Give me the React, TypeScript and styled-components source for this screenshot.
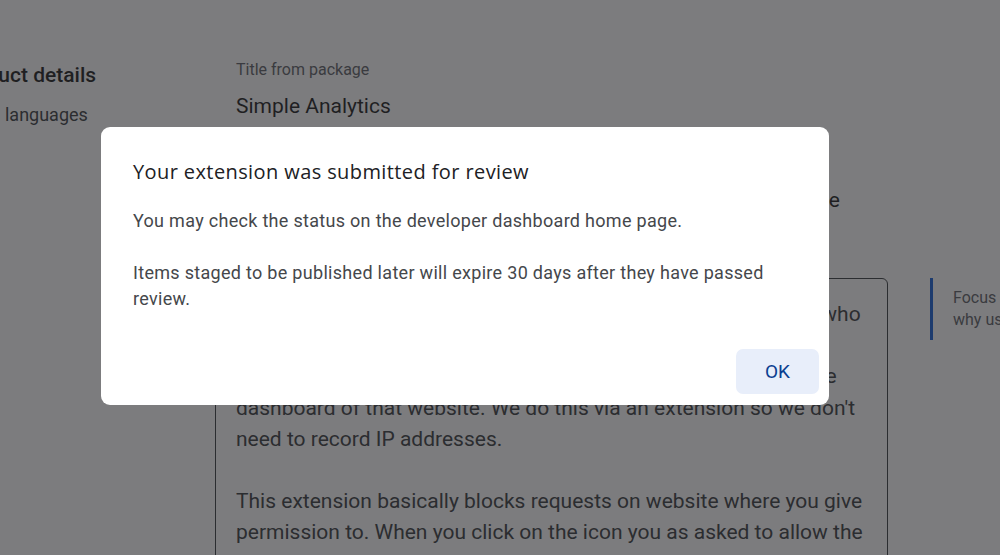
import styled, { createGlobalStyle } from 'styled-components'

const GlobalStyle = createGlobalStyle`
  html, body {
    margin: 0;
    padding: 0;
    background: #ffffff;
    overflow: hidden;
  }
  body {
    font-family: Roboto, "Liberation Sans", sans-serif;
  }
`

const Page = styled.div`
  width: 1000px;
  height: 555px;
  display: flex;
  align-items: flex-start;
  overflow: hidden;
  position: relative;
`

/* left nav, scrolled partly out of view on the left */
const SideNav = styled.nav`
  flex: 0 0 140px;
  width: 140px;
  min-width: 0;
  padding-top: 63px;
  display: flex;
  flex-direction: column;
  gap: 17px;
`

const NavTitle = styled.div`
  font-size: 21px;
  font-weight: 500;
  color: #1f1f1f;
  white-space: nowrap;
  margin-left: -46px;
`

const NavItem = styled.div`
  font-size: 18px;
  color: #3c4043;
  white-space: nowrap;
  margin-left: -20px;
`

const Main = styled.main`
  flex: 0 0 673px;
  width: 673px;
  min-width: 0;
  margin-left: 75px;
  padding-top: 60px;
  display: flex;
  flex-direction: column;
`

const FieldLabel = styled.div`
  font-size: 16px;
  color: #5f6368;
  margin-left: 21px;
`

const FieldValue = styled.div`
  font-size: 21px;
  color: #1f1f1f;
  margin: 15px 0 0 21px;
`

/* right-aligned so its last letter ends just past the dialog edge */
const Heading = styled.div`
  width: 604px;
  font-size: 21px;
  color: #1f1f1f;
  margin: 70px 0 0 21px;
  white-space: nowrap;
  text-align: right;
`

const TextArea = styled.div`
  margin-top: 66px;
  width: 673px;
  border: 1px solid #3c4043;
  border-radius: 6px;
  padding: 20px 20px 0 20px;
  box-sizing: border-box;
  font-size: 21px;
  line-height: 31.2px;
  color: #3c4043;
  height: 340px;
  white-space: nowrap;
`

const Para = styled.p`
  margin: 0 0 31.2px 0;
`

const Aside = styled.aside`
  flex: 0 0 auto;
  box-sizing: border-box;
  margin: 278px 0 0 42px;
  border-left: 3px solid #1a62d8;
  height: 62px;
  padding: 9px 0 0 20px;
  font-size: 16px;
  line-height: 22px;
  color: #5f6368;
  white-space: nowrap;
`

const Scrim = styled.div`
  position: absolute;
  inset: 0;
  background: rgba(32, 33, 36, 0.59);
`

const Dialog = styled.div`
  position: absolute;
  left: 101px;
  top: 127px;
  width: 728px;
  height: 278px;
  box-sizing: border-box;
  background: #ffffff;
  border-radius: 9px;
  padding: 31px 10px 11px 32px;
  display: flex;
  flex-direction: column;
`

const DialogTitle = styled.h2`
  margin: 0;
  font-family: "Open Sans", "Noto Sans", sans-serif;
  font-size: 20px;
  font-weight: 500;
  letter-spacing: 0.4px;
  line-height: 28px;
  color: #202124;
`

const DialogBody = styled.div`
  margin-top: 22px;
  font-size: 18px;
  letter-spacing: 0.3px;
  line-height: 26px;
  color: #45474b;
  padding-right: 40px;
`

const BodyText = styled.p`
  margin: 0 0 26px 0;
`

const Actions = styled.div`
  margin-top: auto;
  display: flex;
  justify-content: flex-end;
`

const OkButton = styled.button`
  width: 83px;
  height: 45px;
  border: none;
  border-radius: 7px;
  background: #e8eefa;
  color: #0b3f91;
  font-family: Roboto, sans-serif;
  font-size: 19px;
  cursor: pointer;
`

export default function App() {
  return (
    <>
      <GlobalStyle />
      <Page>
        <SideNav>
          <NavTitle>Product details</NavTitle>
          <NavItem>All languages</NavItem>
        </SideNav>
        <Main>
          <FieldLabel>Title from package</FieldLabel>
          <FieldValue>Simple Analytics</FieldValue>
          <Heading>Ignore your own visits in Simple Analytics for a site you manage</Heading>
          <TextArea>
            <Para>
              Simple Analytics is a privacy-first analytics tool. It is for people who
              <br />
              have a website with Simple Analytics and want to ignore
              <br />
              their own visits so that all their own page views don't show in the
              <br />
              dashboard of that website. We do this via an extension so we don't
              <br />
              need to record IP addresses.
            </Para>
            <Para>
              This extension basically blocks requests on website where you give
              <br />
              permission to. When you click on the icon you as asked to allow the
            </Para>
          </TextArea>
        </Main>
        <Aside>
          Focus on the purpose
          <br />
          why users need it
        </Aside>
        <Scrim />
        <Dialog role="dialog">
          <DialogTitle>Your extension was submitted for review</DialogTitle>
          <DialogBody>
            <BodyText>You may check the status on the developer dashboard home page.</BodyText>
            <BodyText>
              Items staged to be published later will expire 30 days after they have passed
              review.
            </BodyText>
          </DialogBody>
          <Actions>
            <OkButton>OK</OkButton>
          </Actions>
        </Dialog>
      </Page>
    </>
  )
}
